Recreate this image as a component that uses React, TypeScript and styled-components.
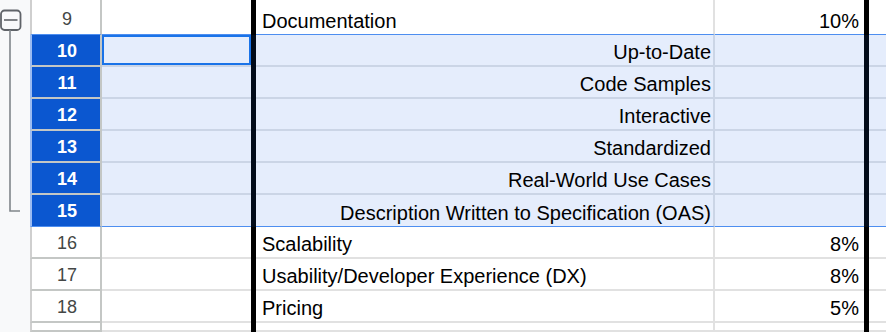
import React from "react";
import styled, { createGlobalStyle, css } from "styled-components";

const GlobalStyle = createGlobalStyle`
  html, body {
    margin: 0;
    padding: 0;
    background: #ffffff;
    font-family: "Liberation Sans", Arial, sans-serif;
  }
`;

const SELECT_FILL = "#e5edfc";
const SELECT_LINE = "#cbd5e6";
const GRID_LINE = "#e1e1e1";
const EDGE_LINE = "#4d8ef0";

const Page = styled.div`
  display: flex;
  width: 886px;
  height: 332px;
  overflow: hidden;
`;

const Gutter = styled.div`
  width: 30px;
  flex: none;
  background: #f8f9fa;
  svg {
    display: block;
  }
`;

const Sheet = styled.div`
  display: flex;
  flex-direction: column;
  width: 856px;
`;

const Row = styled.div<{ $h: number }>`
  display: grid;
  grid-template-columns: 72px 149px 5px 459px 149px 5px 17px;
  height: ${(p) => p.$h}px;
  flex: none;
`;

const lineColor = (p: { $sel?: boolean; $edge?: boolean }) =>
  p.$edge ? EDGE_LINE : p.$sel ? SELECT_LINE : GRID_LINE;

const HeaderCell = styled.div<{ $sel?: boolean; $edge?: boolean }>`
  box-sizing: border-box;
  display: flex;
  align-items: center;
  justify-content: center;
  padding: 2px 0 0 2px;
  font-size: 18px;
  border-left: 2px solid ${(p) => (p.$sel ? "#9cbcf2" : "#cfcfcf")};
  border-right: 2px solid #c4c7c5;
  border-bottom: ${(p) => (p.$edge ? `1px solid ${EDGE_LINE}` : "2px solid #c4c7c5")};
  ${(p) =>
    p.$sel
      ? css`
          background: #0b57d0;
          color: #ffffff;
          font-weight: bold;
        `
      : css`
          background: #ffffff;
          color: #444746;
        `}
`;

const Cell = styled.div<{
  $sel?: boolean;
  $edge?: boolean;
  $right?: boolean;
  $divider?: boolean;
  $active?: boolean;
}>`
  box-sizing: border-box;
  display: flex;
  align-items: flex-end;
  justify-content: ${(p) => (p.$right ? "flex-end" : "flex-start")};
  padding: 0 ${(p) => (p.$right ? (p.$divider ? "2px" : "5px") : "0")} 3px
    ${(p) => (p.$right ? "0" : "6px")};
  font-size: 20px;
  line-height: 20px;
  color: #000000;
  white-space: nowrap;
  background: ${(p) => (p.$sel ? SELECT_FILL : "#ffffff")};
  border-bottom: ${(p) => (p.$edge ? 1 : 2)}px solid ${lineColor};
  border-right: ${(p) => (p.$divider ? `2px solid ${p.$sel ? SELECT_LINE : GRID_LINE}` : "none")};
  ${(p) =>
    p.$active &&
    css`
      box-shadow: inset 0 0 0 2px #1a73e8;
    `}
`;

const Bar = styled.div<{ $sel?: boolean }>`
  background: ${(p) => (p.$sel ? "#020b19" : "#000000")};
`;

type RowData = {
  n?: number;
  label?: string;
  weight?: string;
  sel?: boolean;
  edge?: boolean;
  active?: boolean;
  h?: number;
};

const rows: RowData[] = [
  { h: 3 },
  { n: 9, label: "Documentation", weight: "10%", edge: true },
  { n: 10, label: "Up-to-Date", sel: true, active: true },
  { n: 11, label: "Code Samples", sel: true },
  { n: 12, label: "Interactive", sel: true },
  { n: 13, label: "Standardized", sel: true },
  { n: 14, label: "Real-World Use Cases", sel: true },
  { n: 15, label: "Description Written to Specification (OAS)", sel: true, edge: true },
  { n: 16, label: "Scalability", weight: "8%" },
  { n: 17, label: "Usability/Developer Experience (DX)", weight: "8%" },
  { n: 18, label: "Pricing", weight: "5%" },
  { h: 9 },
];

const GroupBracket = () => (
  <svg width="30" height="332" viewBox="0 0 30 332">
    <rect x="1" y="10.5" width="19.5" height="19.5" rx="3.5" fill="#f8f9fa" stroke="#5f6368" strokeWidth="1.8" />
    <line x1="4" y1="20" x2="17.5" y2="20" stroke="#5f6368" strokeWidth="1.6" />
    <path d="M10 30 V211 H20" fill="none" stroke="#80868b" strokeWidth="1.6" />
  </svg>
);

export default function App() {
  return (
    <>
      <GlobalStyle />
      <Page>
        <Gutter>
          <GroupBracket />
        </Gutter>
        <Sheet>
          {rows.map((r, i) => {
            const sub = r.sel && !r.weight;
            return (
              <Row key={i} $h={r.h ?? 32}>
                <HeaderCell $sel={r.sel} $edge={r.edge}>
                  {r.n}
                </HeaderCell>
                <Cell $sel={r.sel} $edge={r.edge} $active={r.active} />
                <Bar $sel={r.sel} />
                <Cell $sel={r.sel} $edge={r.edge} $right={sub} $divider>
                  {r.label}
                </Cell>
                <Cell $sel={r.sel} $edge={r.edge} $right>
                  {r.weight}
                </Cell>
                <Bar $sel={r.sel} />
                <Cell $sel={r.sel} $edge={r.edge} />
              </Row>
            );
          })}
        </Sheet>
      </Page>
    </>
  );
}
